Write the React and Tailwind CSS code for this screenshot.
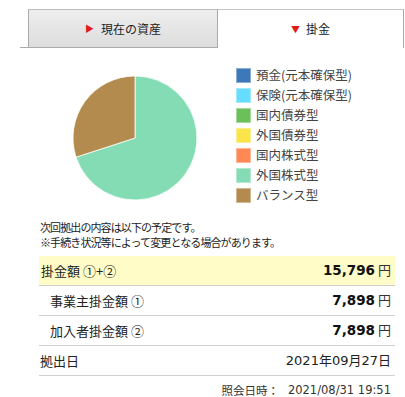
const jp = { fontFamily: '"Noto Sans CJK JP", sans-serif' };
const num = { fontFamily: '"DejaVu Sans", "Noto Sans CJK JP", sans-serif' };

const legend = [
	['預金(元本確保型)', 'bg-[#3d78b8]'],
	['保険(元本確保型)', 'bg-[#66ddff]'],
	['国内債券型', 'bg-[#6cc05a]'],
	['外国債券型', 'bg-[#fbe44a]'],
	['国内株式型', 'bg-[#ff8855]'],
	['外国株式型', 'bg-[#84dcb4]'],
	['バランス型', 'bg-[#b38b4f]'],
];

function Pie() {
	return (
		<svg width="126" height="126" viewBox="-1 -1 126 126">
			<path d="M62,62 L62,0 A62,62 0 1 1 3.03,81.16 Z" fill="#84dcb4" stroke="#fff" strokeWidth="0.8" />
			<path d="M62,62 L3.03,81.16 A62,62 0 0 1 62,0 Z" fill="#b38b4f" stroke="#fff" strokeWidth="0.8" />
		</svg>
	);
}

function Row({ label, value, indent, highlight }) {
	return (
		<div
			className={`flex items-center justify-between h-[30px] pr-[4px] border-b border-[#d0d0d0] ${
				highlight ? 'bg-[#fffcc8] pl-[2px]' : indent ? 'pl-[11px]' : 'pl-[1px]'
			}`}
		>
			<span className="text-[13px] text-[#222]" style={jp}>{label}</span>
			{value}
		</div>
	);
}

function Yen({ n }) {
	return (
		<span className="flex items-baseline gap-[3px]">
			<span className="text-[13.5px] font-bold text-[#111]" style={num}>{n}</span>
			<span className="text-[13px] text-[#333]" style={jp}>円</span>
		</span>
	);
}

export default function App() {
	return (
		<div className="w-[405px] h-[397px] bg-white overflow-hidden text-[#333]" style={jp}>
			{/* tabs */}
			<div className="flex h-[39px] mt-[9px] ml-[20px] mr-[1px]">
				<div className="w-[8px] border-b border-[#aaa]" />
				<div className="w-[190px] flex items-center justify-center gap-[7px] border border-[#aaa] border-t-[#bbb] bg-gradient-to-b from-[#eeeeee] to-[#dddddd]">
					<span className="text-[#e01b1b] text-[9px] leading-none">▶</span>
					<span className="text-[12px] text-[#222]">現在の資産</span>
				</div>
				<div className="flex-1 flex items-center justify-center gap-[6px] border-t border-r border-[#aaa] border-t-[#c4c4c4]">
					<span className="text-[#e01b1b] text-[9px] leading-none">▼</span>
					<span className="text-[12px] text-[#222]">掛金</span>
				</div>
			</div>

			{/* chart */}
			<div className="flex items-start h-[172px]">
				<div className="ml-[72px] mt-[27px]">
					<Pie />
				</div>
				<div className="ml-[38px] mt-[20px] flex flex-col gap-[5px]">
					{legend.map(([name, c]) => (
						<div key={name} className="flex items-center gap-[5px] h-[15px]">
							<div className={`w-[15px] h-[15px] ${c} border border-white/40`} />
							<span className="text-[12.5px] text-[#444] leading-none">{name}</span>
						</div>
					))}
				</div>
			</div>

			{/* notes */}
			<div className="ml-[40px] text-[11px] leading-[15px] tracking-[-0.9px] text-[#222]">
				<p>次回拠出の内容は以下の予定です。</p>
				<p>※手続き状況等によって変更となる場合があります。</p>
			</div>

			{/* table */}
			<div className="ml-[39px] w-[356px] mt-[6px]">
				<Row label="掛金額 ①+②" highlight value={<Yen n="15,796" />} />
				<Row label="事業主掛金額 ①" indent value={<Yen n="7,898" />} />
				<Row label="加入者掛金額 ②" indent value={<Yen n="7,898" />} />
				<Row
					label="拠出日"
					value={<span className="text-[13px] text-[#222]" style={num}>2021年09月27日</span>}
				/>
				<div className="flex justify-end items-center gap-[9px] pr-[4px] mt-[6px] text-[11.5px] text-[#333]">
					<span>照会日時：</span>
					<span style={num}>2021/08/31 19:51</span>
				</div>
			</div>
		</div>
	);
}
